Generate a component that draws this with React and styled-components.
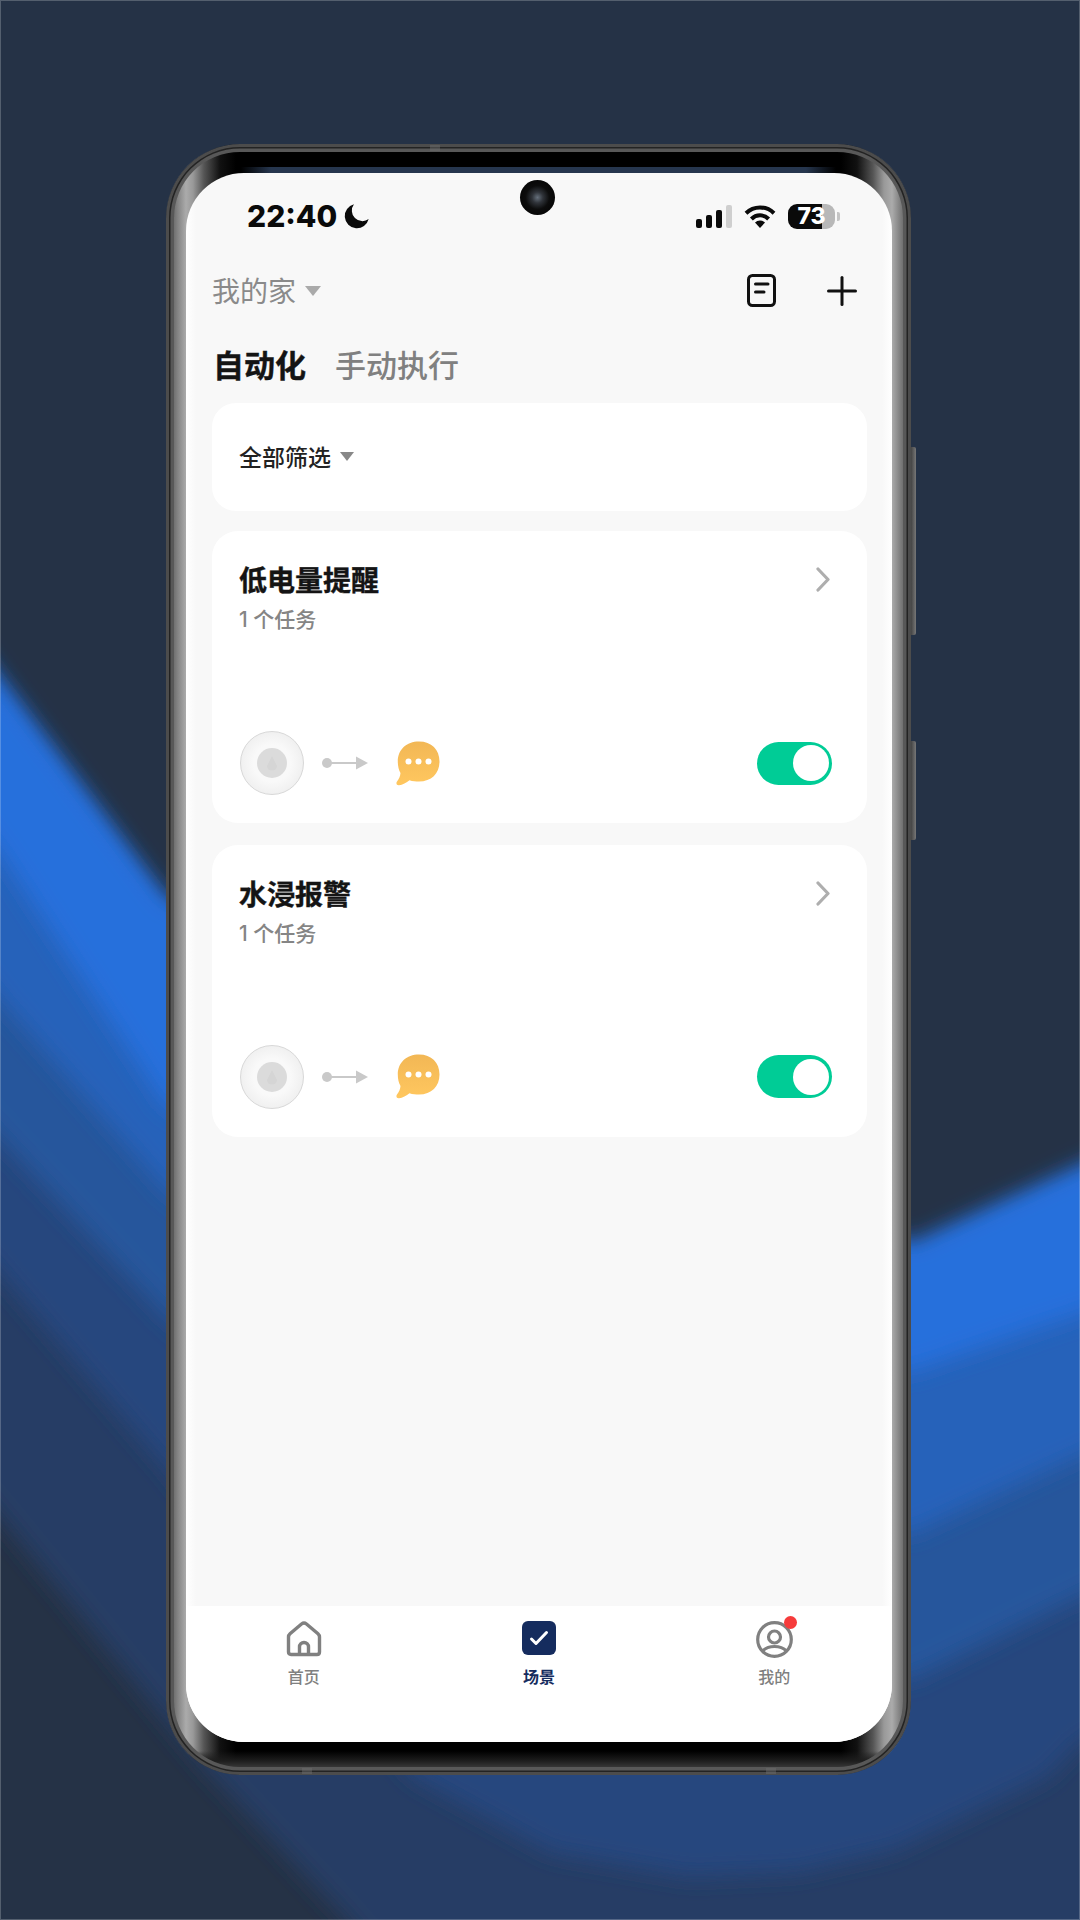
import React from "react";
import styled, { createGlobalStyle } from "styled-components";

const GlobalStyle = createGlobalStyle`
  html, body {
    margin: 0;
    padding: 0;
    background: #253246;
  }
  * {
    box-sizing: border-box;
  }
`;

const CJK = `"Noto Sans CJK SC", "Noto Sans", sans-serif`;

const Page = styled.div`
  position: relative;
  width: 1080px;
  height: 1920px;
  padding: 144px 0 0 166px;
  overflow: hidden;
  background: #253246;
  font-family: ${CJK};

  &::after {
    content: "";
    position: absolute;
    inset: 0;
    border: 1px solid rgba(255, 255, 255, 0.22);
    pointer-events: none;
  }
`;

const Backdrop = styled.svg`
  position: absolute;
  left: 0;
  top: 0;
`;

const Frame = styled.div`
  position: relative;
  width: 745px;
  height: 1631px;
  padding: 29px 19px 33px 20px;
  border-radius: 74px;
  background:
    linear-gradient(to top, #3e3e3e 6px, #1e1e1e 14px, transparent 24px),
    linear-gradient(
      90deg,
      #666 6px,
      #858585 12px,
      #ababab 20px,
      #999 27px,
      #555 38px,
      #111 54px,
      #000 70px,
      #000 calc(100% - 70px),
      #111 calc(100% - 54px),
      #555 calc(100% - 38px),
      #999 calc(100% - 27px),
      #ababab calc(100% - 19px),
      #858585 calc(100% - 12px),
      #666 calc(100% - 6px)
    );
  box-shadow:
    inset 0 0 0 3px #4c4c4c,
    inset 0 0 0 4.5px #232323,
    inset 0 0 0 8px #585858;

  &::before {
    content: "";
    position: absolute;
    top: 23px;
    left: 75px;
    right: 75px;
    height: 7px;
    background: linear-gradient(90deg, transparent, #26364e 30px, #26364e calc(100% - 30px), transparent);
  }
`;

const SideKey = styled.div`
  position: absolute;
  right: -5px;
  top: ${(p) => p.$top}px;
  width: 5px;
  height: ${(p) => p.$h}px;
  border-radius: 0 2px 2px 0;
  background: linear-gradient(90deg, #444, #777);
`;

const Notch = styled.div`
  position: absolute;
  left: ${(p) => p.$left}px;
  ${(p) => (p.$bottom ? "bottom: 1px;" : "top: 1px;")}
  width: 10px;
  height: 6px;
  background: #6e6e6e;
  opacity: 0.45;
`;

const Screen = styled.div`
  position: relative;
  display: flex;
  flex-direction: column;
  width: 706px;
  height: 1569px;
  border-radius: 58px;
  overflow: hidden;
  background: linear-gradient(90deg, #fff, #f8f8f8 10px, #f8f8f8 calc(100% - 10px), #fff);
`;

const Camera = styled.div`
  position: absolute;
  top: 7px;
  left: 334px;
  width: 35px;
  height: 35px;
  border-radius: 50%;
  background: radial-gradient(circle, #66707c 0, #30343a 22%, #0c0c0c 48%, #000 100%);
`;

const StatusBar = styled.div`
  display: flex;
  align-items: center;
  height: 86px;
  margin-bottom: 1px;
  padding: 0 57px 0 61px;
`;

const Time = styled.span`
  font-family: Inter, sans-serif;
  font-size: 30px;
  font-weight: 800;
  line-height: 1;
  color: #0a0a0a;
`;

const MoonIcon = styled.svg`
  margin-left: 6px;
`;

const StatusRight = styled.div`
  display: flex;
  align-items: center;
  margin-left: auto;
`;

const Signal = styled.div`
  display: flex;
  align-items: flex-end;
  gap: 4px;
  height: 23px;
`;

const SignalBar = styled.span`
  width: 6px;
  height: ${(p) => p.$h}px;
  border-radius: 2px;
  background: ${(p) => (p.$off ? "#cfcfcf" : "#0a0a0a")};
`;

const WifiIcon = styled.svg`
  margin-left: 12px;
`;

const Battery = styled.div`
  position: relative;
  display: flex;
  align-items: center;
  justify-content: center;
  width: 47px;
  height: 25px;
  margin-left: 12px;
  border-radius: 9px;
  background: linear-gradient(90deg, #0a0a0a 34px, #b8b8b8 34px);
  font-family: Inter, sans-serif;
  font-size: 23px;
  font-weight: 800;
  line-height: 1;
  color: #fff;

  &::after {
    content: "";
    position: absolute;
    right: -5px;
    top: 8px;
    width: 3px;
    height: 9px;
    border-radius: 0 2px 2px 0;
    background: #c4c4c4;
  }
`;

const TopBar = styled.div`
  display: flex;
  align-items: center;
  height: 60px;
  padding: 0 35px 0 26px;
`;

const HomeName = styled.span`
  font-size: 28px;
  line-height: 36px;
  color: #8a8a8a;
`;

const Caret = styled.span`
  width: 0;
  height: 0;
  margin: ${(p) => (p.$drop ? "2px" : "0")} 0 0 ${(p) => p.$gap}px;
  border-left: ${(p) => p.$size}px solid transparent;
  border-right: ${(p) => p.$size}px solid transparent;
  border-top: ${(p) => p.$size + 2}px solid ${(p) => p.$color};
`;

const TopActions = styled.div`
  display: flex;
  align-items: center;
  gap: 51px;
  margin: 1px 0 0 auto;
`;

const Tabs = styled.div`
  display: flex;
  align-items: center;
  gap: 29px;
  height: 48px;
  margin: 20px 0 15px;
  padding-left: 27px;
`;

const Tab = styled.span`
  font-size: 31px;
  font-weight: ${(p) => (p.$active ? 700 : 500)};
  line-height: 48px;
  color: ${(p) => (p.$active ? "#141414" : "#808080")};
  -webkit-text-stroke: ${(p) => (p.$active ? "0.4px #141414" : "0")};
`;

const Content = styled.div`
  display: flex;
  flex-direction: column;
  flex: 1;
  padding: 0 25px 0 26px;
`;

const FilterCard = styled.div`
  display: flex;
  align-items: center;
  height: 108px;
  margin-bottom: 20px;
  padding: 0 27px 2px;
  border-radius: 24px;
  background: #fff;
`;

const FilterLabel = styled.span`
  font-size: 23px;
  font-weight: 500;
  line-height: 30px;
  color: #222;
`;

const TaskCard = styled.div`
  display: flex;
  flex-direction: column;
  height: 292px;
  margin-bottom: 21.5px;
  padding: 29px 35px 28px 27px;
  border-radius: 26px;
  background: #fff;
`;

const TaskHead = styled.div`
  display: flex;
  justify-content: space-between;
  align-items: flex-start;
`;

const TaskTitle = styled.div`
  font-size: 28px;
  font-weight: 700;
  line-height: 38px;
  color: #141414;
  -webkit-text-stroke: 0.4px #141414;
`;

const TaskSub = styled.div`
  margin-top: 7px;
  font-family: Inter, ${CJK};
  font-size: 21px;
  font-weight: 500;
  line-height: 30px;
  color: #858585;
`;

const ChevronIcon = styled.svg`
  margin: 7px 2px 0 0;
`;

const TaskFoot = styled.div`
  display: flex;
  align-items: center;
  margin-top: auto;
  padding-left: 1px;
`;

const Sensor = styled.div`
  display: flex;
  align-items: center;
  justify-content: center;
  width: 64px;
  height: 64px;
  border-radius: 50%;
  border: 1.5px solid #d8d8d8;
  background: radial-gradient(circle, #f9f9f9 42%, #eeeeee 78%, #dadada 100%);
`;

const SensorCore = styled.div`
  display: flex;
  align-items: center;
  justify-content: center;
  width: 30px;
  height: 30px;
  border-radius: 50%;
  background: #dbdbdb;
`;

const FlowArrow = styled.svg`
  margin-left: 18px;
`;

const ChatIcon = styled.svg`
  margin-left: 28px;
`;

const Toggle = styled.div`
  display: flex;
  align-items: center;
  justify-content: flex-end;
  width: 75px;
  height: 43px;
  margin-left: auto;
  padding-right: 3px;
  border-radius: 22px;
  background: #00cc96;
`;

const ToggleKnob = styled.div`
  width: 36px;
  height: 36px;
  border-radius: 50%;
  background: #fff;
`;

const TabBar = styled.div`
  display: grid;
  grid-template-columns: repeat(3, 1fr);
  height: 136px;
  padding-top: 15px;
  background: #fff;
`;

const TabItem = styled.div`
  display: flex;
  flex-direction: column;
  align-items: center;
`;

const TabIconBox = styled.div`
  position: relative;
  display: flex;
  justify-content: center;
  height: 38px;
`;

const TabLabel = styled.span`
  margin-top: 6px;
  font-size: 16px;
  font-weight: ${(p) => (p.$active ? 700 : 500)};
  line-height: 22px;
  color: ${(p) => (p.$active ? "#152c5e" : "#808080")};
`;

const RedDot = styled.span`
  position: absolute;
  top: -5px;
  right: -4px;
  width: 13px;
  height: 13px;
  border-radius: 50%;
  background: #f63b3b;
`;

// blurred nested bands behind the phone, outermost first.
// outer bands start lower at the top so no dark halo shows on the bright edge
const topEdge = (drop) =>
  `L-100,${546 + drop} L165,${898 + drop} L910,${1244 + drop} L1180,${1120 + drop}`;
const BANDS = [
  { fill: "#253c65", drop: 48, edge: "M1180,1900 L1000,2100 L500,2100 L344,1917 L207,1770 L165,1720 L0,1518 L-100,1400" },
  { fill: "#25477e", drop: 36, edge: "M1180,1690 L1080,1743 L1047,1777 L895,1850 L800,1872 L689,1877 L551,1853 L413,1777 L165,1467 L0,1274 L-100,1160" },
  { fill: "#25569c", drop: 24, edge: "M1180,1550 L1080,1597 L910,1680 L500,1600 L165,1316 L0,1139 L-100,1030" },
  { fill: "#2562ba", drop: 12, edge: "M1180,1410 L1080,1456 L910,1534 L500,1450 L165,1189 L0,1000 L-100,870" },
  { fill: "#256fdc", drop: 0, edge: "M1180,1280 L1080,1314 L910,1372 L500,1300 L165,1105 L0,853 L-100,720" },
];

function Waves() {
  return (
    <Backdrop width="1080" height="1920" viewBox="0 0 1080 1920">
      <defs>
        <filter id="soft" x="-10%" y="-10%" width="120%" height="120%">
          <feGaussianBlur stdDeviation="11" />
        </filter>
      </defs>
      {BANDS.map((b) => (
        <path key={b.fill} d={`${b.edge} ${topEdge(b.drop)} Z`} fill={b.fill} filter="url(#soft)" />
      ))}
    </Backdrop>
  );
}

function Moon() {
  return (
    <MoonIcon width="28" height="28" viewBox="0 0 24 24">
      <path d="M22 14.6A10.4 10.4 0 1 1 9.4 2a9 9 0 0 0 12.6 12.6z" fill="#0a0a0a" />
    </MoonIcon>
  );
}

function Wifi() {
  return (
    <WifiIcon width="32" height="23" viewBox="0 0 32 23" fill="none">
      <path d="M2 8.2A20 20 0 0 1 30 8.2" stroke="#0a0a0a" strokeWidth="4" />
      <path d="M7.4 14A12 12 0 0 1 24.6 14" stroke="#0a0a0a" strokeWidth="4" />
      <path d="M16 23L11 17.6A7 7 0 0 1 21 17.6Z" fill="#0a0a0a" />
    </WifiIcon>
  );
}

function LogIcon() {
  return (
    <svg width="29" height="33" viewBox="0 0 29 33" fill="none" stroke="#111" strokeWidth="3" strokeLinecap="round">
      <rect x="1.5" y="1.5" width="26" height="30" rx="4" />
      <path d="M8.5 10H21" />
      <path d="M8.5 18H17" />
    </svg>
  );
}

function PlusIcon() {
  return (
    <svg width="30" height="30" viewBox="0 0 30 30" fill="none" stroke="#111" strokeWidth="3" strokeLinecap="round">
      <path d="M15 1.5V28.5" />
      <path d="M1.5 15H28.5" />
    </svg>
  );
}

function Chevron() {
  return (
    <ChevronIcon width="14" height="25" viewBox="0 0 14 25" fill="none">
      <path d="M2 2L12 12.5L2 23" stroke="#aeaeae" strokeWidth="3.2" strokeLinecap="round" strokeLinejoin="round" />
    </ChevronIcon>
  );
}

function Arrow() {
  return (
    <FlowArrow width="46" height="16" viewBox="0 0 46 16">
      <circle cx="5" cy="8" r="5" fill="#c9c9c9" />
      <rect x="8" y="7" width="28" height="2" fill="#c9c9c9" />
      <path d="M34 1.5L46 8L34 14.5Z" fill="#c9c9c9" />
    </FlowArrow>
  );
}

function Chat() {
  return (
    <ChatIcon width="44" height="45" viewBox="0 0 44 45">
      <defs>
        <linearGradient id="chatFill" x1="0" y1="0" x2="0" y2="1">
          <stop offset="0" stopColor="#f2b755" />
          <stop offset="1" stopColor="#ffc75f" />
        </linearGradient>
      </defs>
      <path
        d="M23 0.5C35.5 0.5 43.5 8.5 43.5 20.5C43.5 32.5 35.5 40.5 23 40.5C20 40.5 16.5 40.2 13.5 39.2C10.5 41.5 6.5 44 3 44.3C0.5 44.5 -0.2 42.3 1 40.6C3 38 4.3 35 4.5 32C2.7 29 1.8 25 1.8 20.5C1.8 8.5 10.5 0.5 23 0.5Z"
        fill="url(#chatFill)"
      />
      <circle cx="12.5" cy="20.5" r="3" fill="#fff" />
      <circle cx="22.5" cy="20.5" r="3" fill="#fff" />
      <circle cx="32.5" cy="20.5" r="3" fill="#fff" />
    </ChatIcon>
  );
}

function HomeIcon() {
  return (
    <svg width="36" height="36" viewBox="0 0 36 36" fill="none" stroke="#808080" strokeWidth="3.4" strokeLinejoin="round">
      <path d="M2.5 16Q2.5 14 4 12.7L15.5 3Q18 1 20.5 3L32 12.7Q33.5 14 33.5 16V31Q33.5 33.5 31 33.5H5Q2.5 33.5 2.5 31Z" />
      <path d="M13.5 33.5V26A4.5 4.5 0 0 1 22.5 26V33.5" />
    </svg>
  );
}

function SceneIcon() {
  return (
    <svg width="34" height="34" viewBox="0 0 34 34">
      <rect width="34" height="34" rx="6" fill="#152c5e" />
      <path d="M9.5 18L14 22.5L24.5 11.5" fill="none" stroke="#fff" strokeWidth="3" strokeLinecap="round" strokeLinejoin="round" />
    </svg>
  );
}

function UserIcon() {
  return (
    <svg width="37" height="37" viewBox="0 0 37 37" fill="none" stroke="#808080" strokeWidth="3.2">
      <circle cx="18.5" cy="18.5" r="16.8" />
      <circle cx="18.5" cy="16" r="6" />
      <path d="M6.5 30Q11 25.5 18.5 25.5Q26 25.5 30.5 30" />
    </svg>
  );
}

function Task({ title }) {
  return (
    <TaskCard>
      <TaskHead>
        <div>
          <TaskTitle>{title}</TaskTitle>
          <TaskSub>1 个任务</TaskSub>
        </div>
        <Chevron />
      </TaskHead>
      <TaskFoot>
        <Sensor>
          <SensorCore>
            <svg width="12" height="16" viewBox="0 0 12 16">
              <path d="M6 1L11 11A5 4.5 0 0 1 1 11Z" fill="#d5d5d5" />
            </svg>
          </SensorCore>
        </Sensor>
        <Arrow />
        <Chat />
        <Toggle>
          <ToggleKnob />
        </Toggle>
      </TaskFoot>
    </TaskCard>
  );
}

export default function App() {
  return (
    <Page>
      <GlobalStyle />
      <Waves />
      <Frame>
        <SideKey $top={303} $h={188} />
        <SideKey $top={597} $h={99} />
        <Notch $left={264} />
        <Notch $left={136} $bottom />
        <Notch $left={600} $bottom />
        <Screen>
          <Camera />
          <StatusBar>
            <Time>22:40</Time>
            <Moon />
            <StatusRight>
              <Signal>
                <SignalBar $h={9} />
                <SignalBar $h={13} />
                <SignalBar $h={18} />
                <SignalBar $h={23} $off />
              </Signal>
              <Wifi />
              <Battery>73</Battery>
            </StatusRight>
          </StatusBar>
          <TopBar>
            <HomeName>我的家</HomeName>
            <Caret $size={8} $gap={9} $drop $color="#aaaaaa" />
            <TopActions>
              <LogIcon />
              <PlusIcon />
            </TopActions>
          </TopBar>
          <Tabs>
            <Tab $active>自动化</Tab>
            <Tab>手动执行</Tab>
          </Tabs>
          <Content>
            <FilterCard>
              <FilterLabel>全部筛选</FilterLabel>
              <Caret $size={7} $gap={9} $color="#888888" />
            </FilterCard>
            <Task title="低电量提醒" />
            <Task title="水浸报警" />
          </Content>
          <TabBar>
            <TabItem>
              <TabIconBox>
                <HomeIcon />
              </TabIconBox>
              <TabLabel>首页</TabLabel>
            </TabItem>
            <TabItem>
              <TabIconBox>
                <SceneIcon />
              </TabIconBox>
              <TabLabel $active>场景</TabLabel>
            </TabItem>
            <TabItem>
              <TabIconBox>
                <UserIcon />
                <RedDot />
              </TabIconBox>
              <TabLabel>我的</TabLabel>
            </TabItem>
          </TabBar>
        </Screen>
      </Frame>
    </Page>
  );
}
